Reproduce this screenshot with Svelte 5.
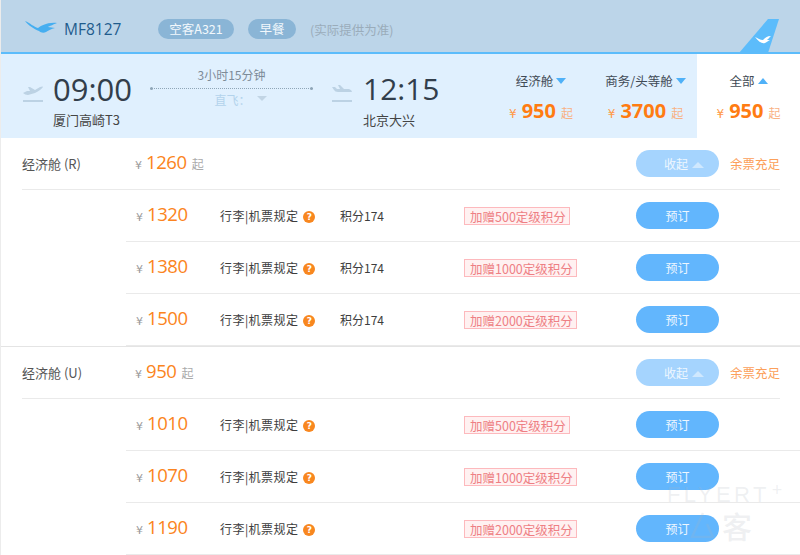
<script>
  const groups = [
    { name: '经济舱 (R)', from: 1260, rows: [
      { price: 1320, points: '积分174', gift: '加赠500定级积分' },
      { price: 1380, points: '积分174', gift: '加赠1000定级积分' },
      { price: 1500, points: '积分174', gift: '加赠2000定级积分' }
    ]},
    { name: '经济舱 (U)', from: 950, rows: [
      { price: 1010, points: '', gift: '加赠500定级积分' },
      { price: 1070, points: '', gift: '加赠1000定级积分' },
      { price: 1190, points: '', gift: '加赠2000定级积分' }
    ]}
  ];
  const fares = [
    { label: '经济舱', price: 950, cls: 'f1' },
    { label: '商务/头等舱', price: 3700, cls: 'f2' }
  ];
</script>

{#snippet plane(flip)}
  <svg class="plane" viewBox="0 0 20 18" width="20" height="18">
    <path d={flip ? 'M0 3 L3 3 L5 5 L8 5 L6 1 L8 1 L12 5 L17 5 Q20 6 20 8 L6 8 Q3 8 2 6 Z' : 'M0 9 L4 7 L7 7 L5 3 L7 3 L12 6 L17 3 Q20 2 20 3 Q18 6 12 9 L5 11 Q2 11 0 9 Z'} fill="#bcd2e4"/>
    <rect x="0" y="16" width="20" height="2" fill="#bcd2e4"/>
  </svg>
{/snippet}

<div class="page">
  <header class="top">
    <svg class="logo" viewBox="0 0 32 13" width="32" height="13">
      <path d="M0 0 C5 2 9 6 13 7 C16 5 22 1 32 2 C27 4 25 5 23 6 L30 7 C26 8 24 9 21 11 C19 12 16 12 14 10 C9 8 3 4 0 0 Z" fill="#45aef0"/>
    </svg>
    <span class="flight-no">MF8127</span>
    <span class="pill p1">空客A321</span>
    <span class="pill p2">早餐</span>
    <span class="note">(实际提供为准)</span>
    <svg class="tail" viewBox="0 0 42 36" width="42" height="36">
      <path d="M1 35 L30 1 L41 1 L30 35 Z" fill="#5cbcfb"/>
      <path d="M17 19 C20 20 22 22 25 22 C27 20 29 18 33 18 C31 20 30 21 29 22 L32 22 C30 23 29 24 27 25 C24 26 21 24 17 19 Z" fill="#fff"/>
    </svg>
  </header>

  <section class="flight">
    <div class="leg dep">
      {@render plane(false)}
      <div class="leg-text">
        <div class="time">09:00</div>
        <div class="place">厦门高崎T3</div>
      </div>
    </div>
    <div class="route">
      <div class="dur">3小时15分钟</div>
      <div class="line"></div>
      <div class="direct">直飞：<i class="tri-down"></i></div>
    </div>
    <div class="leg arr">
      {@render plane(true)}
      <div class="leg-text">
        <div class="time">12:15</div>
        <div class="place">北京大兴</div>
      </div>
    </div>
    {#each fares as f}
      <div class="fare {f.cls}">
        <div class="fare-label">{f.label}<i class="caret"></i></div>
        <div class="fare-price"><span class="yen">¥</span><b>{f.price}</b><span class="qi">起</span></div>
      </div>
    {/each}
    <div class="fare all">
      <div class="fare-label">全部<i class="caret up"></i></div>
      <div class="fare-price"><span class="yen">¥</span><b>950</b><span class="qi">起</span></div>
    </div>
  </section>

  {#each groups as g, gi}
    <section class="group" class:second={gi === 1}>
      <div class="head">
        <div class="cabin">{g.name}</div>
        <div class="price"><span class="y">¥</span><span class="n">{g.from}</span><span class="q">起</span></div>
        <button class="btn fold">收起<i class="tri-up"></i></button>
        <div class="stock">余票充足</div>
      </div>
      {#each g.rows as r}
        <div class="sub">
          <div class="price"><span class="y">¥</span><span class="n">{r.price}</span></div>
          <div class="rules">行李|机票规定<i class="help">?</i></div>
          <div class="points">{r.points}</div>
          <div class="gift-cell"><span class="gift">{r.gift}</span></div>
          <button class="btn">预订</button>
        </div>
      {/each}
    </section>
  {/each}

  <div class="mark">
    <div class="mark-en">FLYERT<span class="plus">+</span></div>
    <div class="mark-cn">
      <svg viewBox="0 0 24 26" width="24" height="26">
        <path d="M13 1 L2 25 L23 25 L17 12" fill="none" stroke="currentColor" stroke-width="2.5"/>
      </svg>
      <span>客</span>
    </div>
  </div>
</div>

<style>
  :global(body) { margin: 0; background: #fff; }
  .page {
    position: relative; width: 800px; height: 555px; overflow: hidden; background: #fff;
    font-family: "Noto Sans CJK SC", "Noto Sans", sans-serif; font-size: 12px; color: #444;
    box-sizing: border-box; border-left: 1px solid #ececec;
  }
  i { font-style: normal; display: inline-block; }

  .top {
    position: relative; height: 54px; box-sizing: border-box; background: #bcd5e9;
    border-bottom: 2px solid #5cbcfb;
    display: flex; align-items: center; padding: 6px 0 0 24px;
  }
  .logo { margin: -4px 7px 0 0; }
  .flight-no { font: 15.5px "Open Sans", sans-serif; color: #1f5c8d; width: 94px; }
  .pill { height: 20px; line-height: 20px; border-radius: 10px; background: #8ab5d6; color: #f2f8fc; font-size: 12.5px; text-align: center; }
  .p1 { width: 76px; margin-right: 14px; }
  .p2 { width: 48px; margin-right: 14px; }
  .note { color: #9aacba; font-size: 12.5px; }
  .tail { position: absolute; right: 20px; top: 18px; }

  .flight { height: 84px; background: #e0f0fe; display: flex; }
  .leg { display: flex; align-items: flex-start; }
  .dep { width: 127px; padding-left: 22px; box-sizing: border-box; }
  .arr { width: 153px; }
  .plane { margin-top: 30px; margin-right: 10px; flex: none; }
  .arr .plane { margin-right: 11px; }
  .leg-text { padding-top: 15px; }
  .time { font: 31px/40px "Open Sans", sans-serif; color: #323e4b; }
  .arr .time { font-size: 30px; }
  .place { font-size: 13px; line-height: 18px; margin-top: 2px; color: #444; white-space: nowrap; }
  .route { width: 204px; padding: 0 19px 0 22px; box-sizing: border-box; text-align: center; }
  .dur { margin-top: 12px; height: 18px; line-height: 18px; color: #7d8b98; font-size: 12px; }
  .line { height: 0; border-top: 1px dotted #8fa6b8; margin: 4px 0 0; position: relative; }
  .line::before, .line::after { content: ""; position: absolute; top: -2px; width: 3px; height: 3px; border-radius: 50%; background: #8fa6b8; }
  .line::before { left: 0; } .line::after { right: 0; }
  .direct { margin-top: 2px; color: #b3d3ec; font-size: 12px; line-height: 18px; padding-left: 18px; }
  .tri-down { width: 0; height: 0; border: 5px solid transparent; border-top: 5px solid #c2d5e5; border-bottom: 0; margin-left: 6px; vertical-align: 4px; }

  .fare { box-sizing: border-box; text-align: center; padding-top: 18px; }
  .f1 { width: 112px; }
  .f2 { width: 97px; margin-right: 3px; }
  .all { width: 103px; background: #fff; }
  .fare-label { font-size: 12.5px; line-height: 18px; color: #3f4a55; white-space: nowrap; }
  .caret { width: 0; height: 0; border: 5px solid transparent; border-top: 6px solid #4fb1f8; border-bottom: 0; margin-left: 3px; vertical-align: 2px; }
  .caret.up { border-top: 0; border-bottom: 6px solid #4fb1f8; }
  .fare-price { margin-top: 8px; line-height: 26px; white-space: nowrap; }
  .fare-price b { font: bold 20px/26px "Open Sans", sans-serif; color: #ff7c12; margin: 0 5px; }
  .yen { font: 12px "DejaVu Sans", sans-serif; color: #ff9a4a; }
  .qi { font-size: 12px; color: #f9b183; }

  .group.second { border-top: 1px solid #e4e4e4; }
  .head { display: flex; align-items: center; height: 52px; margin: 0 20px 0 21px; border-bottom: 1px solid #eaeaea; box-sizing: border-box; }
  .cabin { width: 113px; font-size: 13px; color: #555; }
  .head .price { width: 0; flex: 1; }
  .price { margin-bottom: 4px; }
  .price .y { font: 11px "DejaVu Sans", sans-serif; color: #999; margin-right: 4px; }
  .price .n { font: 18.5px "Open Sans", sans-serif; letter-spacing: -0.4px; color: #fb8420; }
  .price .q { font-size: 12px; color: #aaa; margin-left: 5px; }
  .btn {
    width: 83px; height: 27px; padding: 0; border: 0; border-radius: 14px; background: #62b6fd;
    color: #eef7ff; font: 12px "Noto Sans CJK SC", sans-serif; flex: none;
  }
  .fold { background: #a5d4fe; padding-left: 28px; text-align: left; }
  .tri-up { width: 0; height: 0; border: 6px solid transparent; border-bottom: 6px solid #cfe8fe; border-top: 0; margin-left: 4px; vertical-align: 1px; }
  .stock { width: 50px; margin-left: 11px; color: #fca05a; font-size: 12.5px; white-space: nowrap; }

  .sub { display: flex; align-items: center; height: 52px; margin-left: 125px; padding-left: 10px; box-sizing: border-box; border-bottom: 1px solid #eaeaea; }
  .sub .price { width: 84px; }
  .rules { width: 120px; font-size: 12px; letter-spacing: 0.45px; color: #3d3d3d; white-space: nowrap; }
  .help { width: 12px; height: 12px; margin-left: 5px; border-radius: 50%; background: #f8871f; color: #fff; font: bold 9px/12px "DejaVu Sans", sans-serif; text-align: center; letter-spacing: 0; vertical-align: 1px; }
  .points { width: 124px; font-size: 12px; color: #3d3d3d; }
  .gift-cell { width: 172px; }
  .gift { display: inline-block; height: 18px; line-height: 17px; padding: 0 3px 0 5px; box-sizing: border-box; border: 1px solid #fdb9bd; background: #fff1f1; color: #ee7f84; font-size: 12.5px; white-space: nowrap; }

  .mark { position: absolute; left: 666px; top: 482px; width: 130px; pointer-events: none; color: rgba(170,180,190,.2); }
  .mark-en { font: 22px/26px "Liberation Sans", sans-serif; letter-spacing: 3.4px; white-space: nowrap; }
  .plus { font-size: 18px; position: relative; top: -6px; margin-left: 2px; }
  .mark-cn { display: flex; align-items: center; margin: 0 0 0 23px; gap: 8px; }
  .mark-cn span { font: 500 30px/32px "Noto Sans CJK SC", sans-serif; }
</style>
